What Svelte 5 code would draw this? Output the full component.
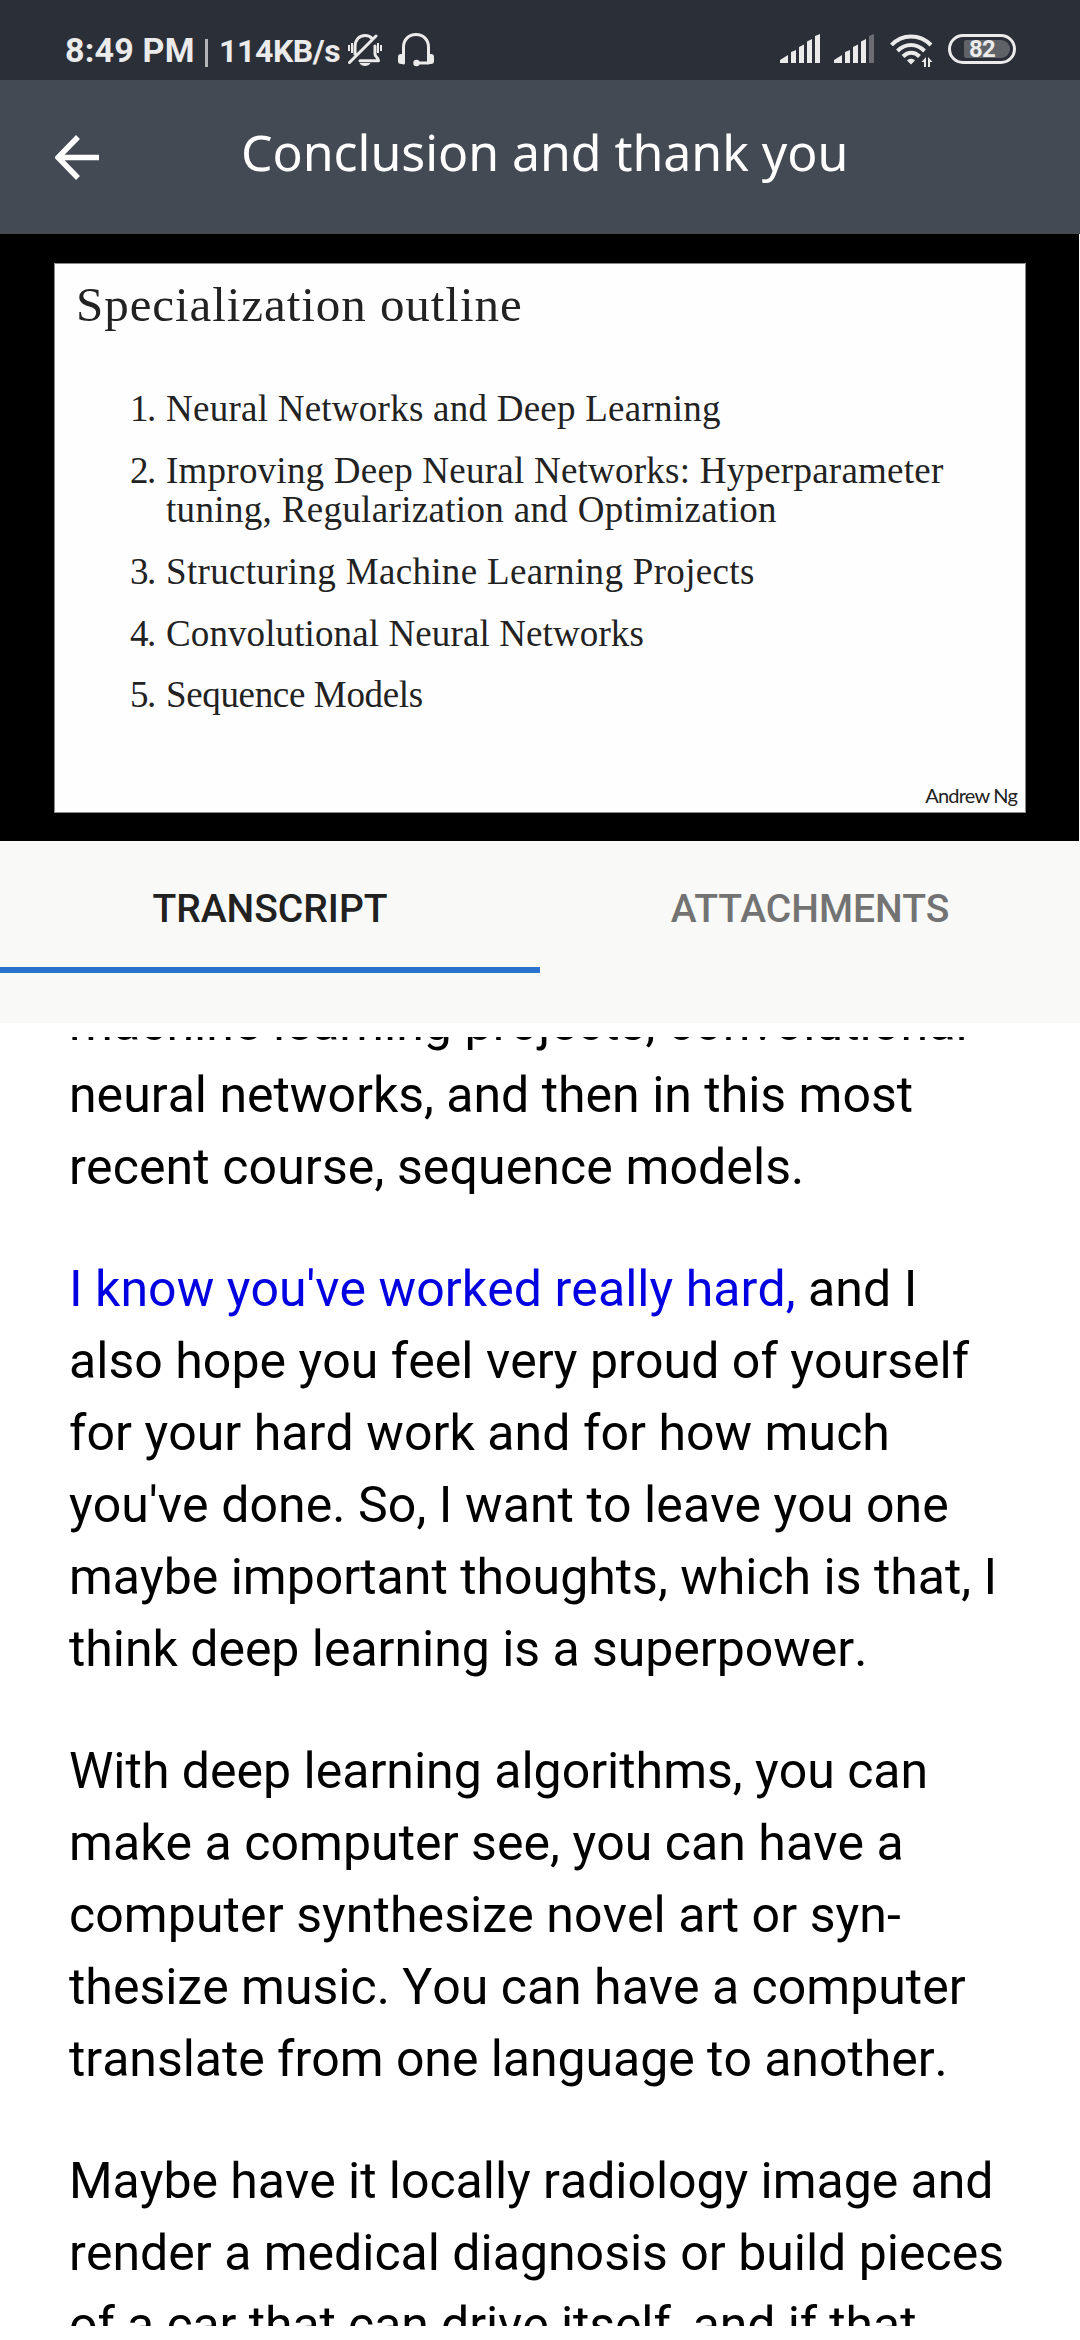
<script>
  // Each line is [text, tracking in px].
  const outline = [
    [['Neural Networks and Deep Learning', 0.25]],
    [
      ['Improving Deep Neural Networks: Hyperparameter', 0.24],
      ['tuning, Regularization and Optimization', 0.33]
    ],
    [['Structuring Machine Learning Projects', 0.33]],
    [['Convolutional Neural Networks', 0.11]],
    [['Sequence Models', -0.35]]
  ];
  const paragraphs = [
    [
      ['machine learning projects, convolutional', 0.08],
      ['neural networks, and then in this most', 0],
      ['recent course, sequence models.', 0.11]
    ],
    [
      ['and I', 0.04],
      ['also hope you feel very proud of yourself', 0.04],
      ['for your hard work and for how much', 0.05],
      ["you've done. So, I want to leave you one", 0.08],
      ['maybe important thoughts, which is that, I', 0],
      ['think deep learning is a superpower.', -0.03]
    ],
    [
      ['With deep learning algorithms, you can', 0],
      ['make a computer see, you can have a', 0.05],
      ['computer synthesize novel art or syn-', 0.09],
      ['thesize music. You can have a computer', 0],
      ['translate from one language to another.', -0.05]
    ],
    [
      ['Maybe have it locally radiology image and', -0.03],
      ['render a medical diagnosis or build pieces', 0],
      ['of a car that can drive itself, and if that', -0.1]
    ]
  ];
</script>

{#snippet signal(weak)}
  <svg class="signal" viewBox="0 0 40 30" width="40" height="30">
    <path d="M0 26 8 21V29H0ZM11 18 16 16V29H11ZM19 13 24 10.500V29H19ZM27 7.500 32 5V29H27Z" />
    <path class:dim={weak} d="M35 2 40 0V29H35Z" />
  </svg>
{/snippet}

<div class="screen">
  <header class="status">
    <span class="time">8:49 PM</span>
    <span class="bar"></span>
    <span class="rate">114KB/s</span>
    <svg class="bell" viewBox="0 0 34 34" width="34" height="34">
      <path class="line" d="M7 20V13C7 6 11 1.500 17 1.500c3 0 5.500 1 7 3M27 12v8c0 3 3 3 3.500 6.700H12M1.500 28.500 28 2" />
      <path d="M11.500 29h11c-2 4-9 4-11 0Z" />
      <path class="thin" d="M1 11v6M4 9v10M30 9v10M33 11v6" />
    </svg>
    <svg class="phones" viewBox="0 0 36 34" width="36" height="34">
      <path class="line" d="M5.500 30V14c0-7 5-12.500 12.500-12.500S30.500 7 30.500 14v16M18 30h12" />
      <rect x="0" y="21" width="7" height="10" rx="3" /><rect x="29" y="21" width="7" height="10" rx="3" />
      <circle cx="18.500" cy="30" r="3.200" />
    </svg>
    <span class="grow"></span>
    {@render signal(false)}
    {@render signal(true)}
    <svg class="wifi" viewBox="0 0 43 34" width="43" height="34">
      <path class="arc" d="M1.500 11C12-.5 30-.5 41 11M7.500 17c8-8 19-8 27 0M13 22.500c5-5 11.500-5 16.500 0" />
      <path d="M17 26.500c2-2.500 6-2.500 8 0L21 30.500Z" />
      <path d="M36 23v10h-2v-5h-2.500ZM38 33V23l4.500 5H40v5Z" />
    </svg>
    <span class="battery"><span class="level">82</span></span>
  </header>

  <div class="appbar">
    <svg viewBox="0 0 44 46" width="44" height="46">
      <path d="M23 2 3 22.500 23 43M4 22.500H44" />
    </svg>
    <h1>Conclusion and thank you</h1>
  </div>

  <section class="video">
    <div class="slide">
      <h2>Specialization outline</h2>
      <ol>
        {#each outline as item, i}
          <li>
            <span class="num">{i + 1}.</span>
            <span>{#each item as [text, tracking]}<span class="row" style:letter-spacing="{tracking}px">{text}</span>{/each}</span>
          </li>
        {/each}
      </ol>
      <p class="author">Andrew Ng</p>
    </div>
  </section>

  <nav class="tabs">
    <div class="tab active">TRANSCRIPT</div>
    <div class="tab">ATTACHMENTS</div>
  </nav>

  <main class="transcript">
    {#each paragraphs as lines, p}
      <p>
        {#each lines as [text, tracking], i}
          <span class="row" style:letter-spacing="{tracking}px">{#if p === 1 && i === 0}<a class="current" href="#now">I know you've worked really hard,</a>{' '}{/if}{text}</span>
        {/each}
      </p>
    {/each}
  </main>
</div>

<style>
  :global(body) { margin: 0; background: #fff; }
  .screen { width: 1080px; height: 2340px; display: flex; flex-direction: column; overflow: hidden; background: #fff; font-family: Roboto, sans-serif; }
  .status { box-sizing: border-box; height: 80px; flex: none; display: flex; align-items: flex-start; padding: 0 64px 0 65px; background: #2b2f37; color: #ebebeb; font-weight: 700; white-space: nowrap; }
  .status svg { fill: #ebebeb; flex: none; margin-top: 34px; }
  .time { width: 129px; font-size: 34px; line-height: 40px; margin-top: 30px; letter-spacing: .2px; }
  .bar { width: 3px; height: 28px; margin: 39px 12px 0 11px; background: #b5b6b9; }
  .rate { width: 122px; margin-left: -1px; font-size: 32px; line-height: 40px; margin-top: 31px; letter-spacing: -.4px; }
  .status .bell { margin-left: 7px; }
  .status .phones { margin: 33px 0 0 16px; }
  .grow { flex: 1; }
  .line, .thin { fill: none; stroke: #ebebeb; stroke-width: 3; stroke-linecap: round; stroke-linejoin: round; }
  .thin { stroke-width: 2; stroke-linecap: butt; }
  .signal { margin-right: 14px; }
  .dim { fill: #6b6d73; }
  .wifi { margin-left: 2px; }
  .arc { fill: none; stroke: #ebebeb; stroke-width: 4; }
  .battery { box-sizing: border-box; width: 68px; height: 30px; margin: 34px 0 0 15px; border: 3px solid #ebebeb; border-radius: 15px; padding: 3px 3px 3px 13px; }
  .level { display: block; height: 18px; line-height: 19px; padding-left: 5px; border-radius: 2px 9px 9px 2px; background: #5f6267; font-size: 24px; letter-spacing: -.8px; }

  .appbar { height: 154px; flex: none; display: flex; align-items: flex-start; background: #444a53; }
  .appbar svg { margin: 55px 0 0 55px; fill: none; stroke: #fff; stroke-width: 5.500; }
  h1 { margin: 37px 0 0 142px; font: 400 50px/70px "Noto Sans", sans-serif; letter-spacing: -.05px; color: #fff; white-space: nowrap; }

  .video { box-sizing: border-box; height: 607px; flex: none; padding: 29px 53px 28px 54px; background: #000; border-right: 1px solid #f9f9f8; }
  .slide { box-sizing: border-box; height: 550px; display: flex; flex-direction: column; background: #fefefe; color: #222; font-family: "Liberation Serif", serif; border: 1px solid #8a8a8a; white-space: nowrap; }
  h2 { margin: 14px 0 0 21px; font-size: 49px; line-height: 54px; font-weight: 400; letter-spacing: .940px; }
  ol { list-style: none; margin: 57px 0 0 75px; padding: 0; font-size: 37px; line-height: 39.300px; }
  li { display: flex; margin-bottom: 22.500px; }
  .num { width: 36px; letter-spacing: -1.500px; }
  .author { margin: auto 8px 5px auto; font: 20px/24px Lato, sans-serif; letter-spacing: -.8px; }

  .tabs { height: 182px; flex: none; display: flex; background: #f9f9f8; }
  .tab { box-sizing: border-box; width: 540px; height: 132px; padding-top: 45px; text-align: center; font-size: 39px; line-height: 46px; font-weight: 500; color: #737373; }
  .active { color: #212121; border-bottom: 6px solid #2a73cc; }

  .transcript { margin-top: 14px; height: 1289px; flex: none; overflow: hidden; padding-left: 69px; color: #000; font-size: 50px; line-height: 72px; font-kerning: none; }
  .transcript p { margin: 0 0 50px; }
  .transcript p:first-child { margin-top: -50px; }
  .row { display: block; white-space: nowrap; }
  .current { color: #0000e0; text-decoration: none; }
</style>
